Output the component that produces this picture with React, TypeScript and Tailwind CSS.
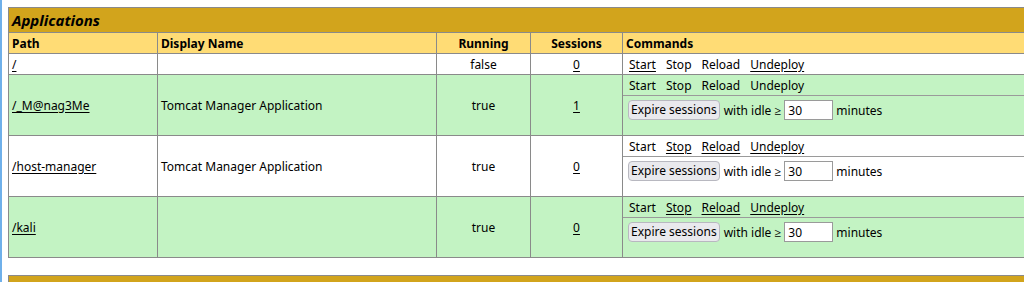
import React from "react";

type Row = {
  path: string;
  name: string;
  running: string;
  sessions: string;
  green: boolean;
  links: [boolean, boolean, boolean, boolean];
  expire: boolean;
};

const rows: Row[] = [
  { path: "/", name: "", running: "false", sessions: "0", green: false, links: [true, false, false, true], expire: false },
  { path: "/_M@nag3Me", name: "Tomcat Manager Application", running: "true", sessions: "1", green: true, links: [false, false, false, false], expire: true },
  { path: "/host-manager", name: "Tomcat Manager Application", running: "true", sessions: "0", green: false, links: [false, true, true, true], expire: true },
  { path: "/kali", name: "", running: "true", sessions: "0", green: true, links: [false, true, true, true], expire: true },
];

const cmds = ["Start", "Stop", "Reload", "Undeploy"];

function Commands({ row }: { row: Row }) {
  const list = (
    <div className="flex gap-[10px] px-[6px] h-[20px] items-center">
      {cmds.map((c, i) => (
        <span key={c} className={row.links[i] ? "underline underline-offset-2" : ""}>{c}</span>
      ))}
    </div>
  );
  if (!row.expire) return list;
  return (
    <div className="h-[60px]">
      <div className="border-b border-[#9a9a9a]">{list}</div>
      <div className="flex items-center px-[5px] pt-[4px]">
        <button className="h-[20px] px-[2px] bg-[#e9e9ed] border border-[#b8b8c0] rounded-[4px] text-[12px] leading-none">
          Expire sessions
        </button>
        <span className="ml-[4px]">with idle ≥</span>
        <input
          defaultValue="30"
          className="ml-[3px] w-[49px] h-[20px] border border-[#9a9a9a] bg-white px-[3px] text-[12px] outline-none"
        />
        <span className="ml-[3px]">minutes</span>
      </div>
    </div>
  );
}

export default function App() {
  const cell = "border border-[#8a8a8a] px-[3px]";
  return (
    <div
      className="w-[1024px] h-[282px] overflow-hidden bg-white border-l-2 border-[#6fb0ea] pl-[6px] pt-[7px] text-[12px] leading-[17px] text-black"
      style={{ fontFamily: '"Noto Sans", "Open Sans", sans-serif' }}
    >
      <table className="w-[1100px] table-fixed border-collapse">
        <colgroup>
          <col className="w-[149px]" />
          <col className="w-[279px]" />
          <col className="w-[94px]" />
          <col className="w-[92px]" />
          <col />
        </colgroup>
        <tbody>
          <tr>
            <td colSpan={5} className={`${cell} h-[25px] bg-[#d2a41c] font-bold italic text-[15px]`}>
              Applications
            </td>
          </tr>
          <tr className="bg-[#ffdc75] font-bold">
            <td className={`${cell} h-[21px]`}>Path</td>
            <td className={`${cell}`}>Display Name</td>
            <td className={`${cell} text-center`}>Running</td>
            <td className={`${cell} text-center`}>Sessions</td>
            <td className={`${cell}`}>Commands</td>
          </tr>
          {rows.map((r) => (
            <tr key={r.path} className={r.green ? "bg-[#c3f3c3]" : "bg-white"}>
              <td className={`${cell} h-[21px]`}>
                <span className="underline underline-offset-2">{r.path}</span>
              </td>
              <td className={cell}>{r.name}</td>
              <td className={`${cell} text-center`}>{r.running}</td>
              <td className={`${cell} text-center`}>
                <span className="underline underline-offset-2">{r.sessions}</span>
              </td>
              <td className={`${cell} !px-0 align-top`}>
                <Commands row={r} />
              </td>
            </tr>
          ))}
        </tbody>
      </table>
      <div className="mt-[17px] w-[1100px] h-[30px] border border-[#8a8a8a] bg-[#d2a41c]" />
    </div>
  );
}
